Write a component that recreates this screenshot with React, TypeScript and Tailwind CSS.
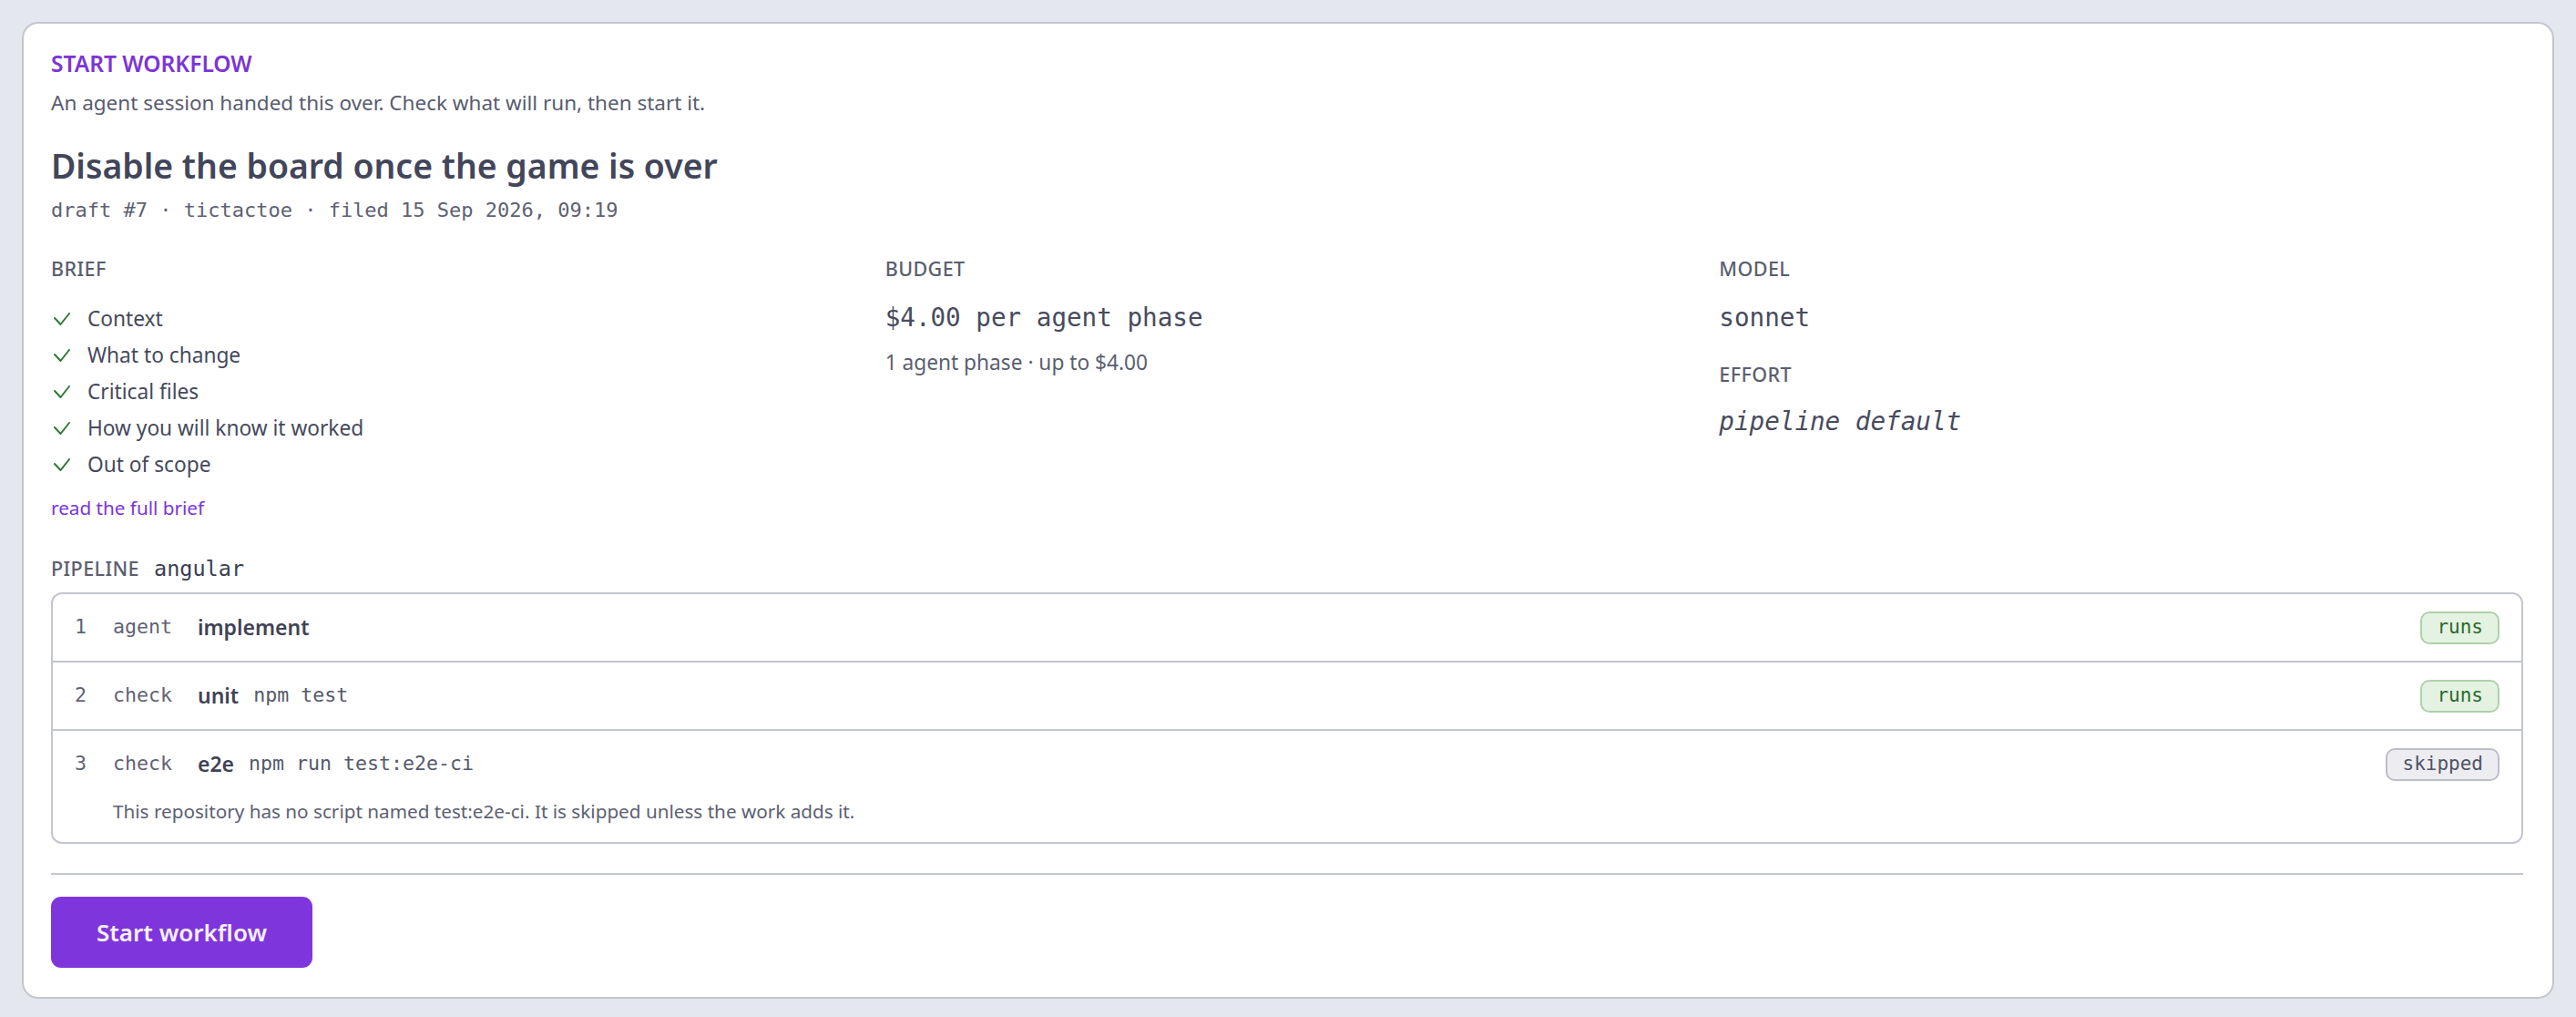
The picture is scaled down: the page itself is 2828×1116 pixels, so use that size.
import React from 'react';

type Step = {
  n: number;
  kind: string;
  name: string;
  cmd?: string;
  status: 'runs' | 'skipped';
  note?: string;
};

const briefItems = [
  'Context',
  'What to change',
  'Critical files',
  'How you will know it worked',
  'Out of scope',
];

const steps: Step[] = [
  { n: 1, kind: 'agent', name: 'implement', status: 'runs' },
  { n: 2, kind: 'check', name: 'unit', cmd: 'npm test', status: 'runs' },
  {
    n: 3,
    kind: 'check',
    name: 'e2e',
    cmd: 'npm run test:e2e-ci',
    status: 'skipped',
    note: 'This repository has no script named test:e2e-ci. It is skipped unless the work adds it.',
  },
];

const Check = () => (
  <svg viewBox="0 0 18 15" className="w-[18px] h-[15px] ml-[3px]" fill="none">
    <polyline points="1,6 7.5,13 17,1" stroke="#2f7a34" strokeWidth="2" strokeLinecap="round" strokeLinejoin="round" />
  </svg>
);

const Label = ({ children, className = '' }: { children: React.ReactNode; className?: string }) => (
  <div className={`text-[21.5px] leading-[28px] font-medium uppercase tracking-[0.02em] text-[#5a5e70] ${className}`}>
    {children}
  </div>
);

const Badge = ({ status }: { status: Step['status'] }) =>
  status === 'runs' ? (
    <span className="inline-flex items-center h-[36px] px-[16px] rounded-[10px] border-2 border-[#aed1a9] bg-[#e4f2e2] font-['DejaVu_Sans_Mono',monospace] text-[21px] text-[#2b6a2d]">
      runs
    </span>
  ) : (
    <span className="inline-flex items-center h-[36px] px-[16px] rounded-[10px] border-2 border-[#bcbec8] bg-[#ededf1] font-['DejaVu_Sans_Mono',monospace] text-[21px] text-[#4f5366]">
      skipped
    </span>
  );

export default function App() {
  return (
    <div className="min-h-screen bg-[#e5e7ef] p-[24px] font-['Noto_Sans',sans-serif]">
      <div className="rounded-[18px] border-2 border-[#c3c5cf] bg-white pl-[30px] pr-[32px] pt-[29px] pb-[32px]">
        {/* header */}
        <div className="text-[24.5px] leading-[30px] font-semibold uppercase text-[#7b35d6]">Start workflow</div>
        <p className="mt-[13px] text-[22.5px] leading-[30px] text-[#585c6e]">
          An agent session handed this over. Check what will run, then start it.
        </p>
        <h1 className="mt-[30px] text-[37.4px] leading-[48px] font-semibold text-[#42465a]">
          Disable the board once the game is over
        </h1>
        <div className="mt-[10px] font-['DejaVu_Sans_Mono',monospace] text-[22px] leading-[30px] text-[#5d6173]">
          draft #7 · tictactoe · filed 15 Sep 2026, 09:19
        </div>

        {/* summary columns */}
        <div className="mt-[35px] grid grid-cols-3 gap-x-[33px]">
          <div>
            <Label>Brief</Label>
            <ul className="mt-[21px]">
              {briefItems.map((item) => (
                <li key={item} className="flex items-center text-[22.7px] leading-[40px] text-[#45495c]">
                  <span className="w-[40px] flex items-center">
                    <Check />
                  </span>
                  {item}
                </li>
              ))}
            </ul>
            <a className="mt-[13px] block text-[20.7px] leading-[28px] text-[#7b35d6]">read the full brief</a>
          </div>

          <div>
            <Label>Budget</Label>
            <div className="mt-[22px] font-['DejaVu_Sans_Mono',monospace] text-[27.6px] leading-[36px] text-[#474b5e]">
              $4.00 per agent phase
            </div>
            <div className="mt-[16px] text-[22.7px] leading-[30px] text-[#5a5e70]">1 agent phase · up to $4.00</div>
          </div>

          <div>
            <Label>Model</Label>
            <div className="mt-[22px] font-['DejaVu_Sans_Mono',monospace] text-[27.6px] leading-[36px] text-[#474b5e]">
              sonnet
            </div>
            <Label className="mt-[30px]">Effort</Label>
            <div className="mt-[20px] font-['DejaVu_Sans_Mono',monospace] italic text-[27.6px] leading-[36px] text-[#474b5e]">
              pipeline default
            </div>
          </div>
        </div>

        {/* pipeline */}
        <div className="mt-[39px] flex items-baseline gap-[16px]">
          <Label>Pipeline</Label>
          <span className="font-['DejaVu_Sans_Mono',monospace] text-[23.5px] leading-[28px] text-[#3a3e52]">angular</span>
        </div>

        <div className="mt-[12px] rounded-[12px] border-2 border-[#c3c5cf]">
          {steps.map((s, i) => (
            <div key={s.n} className={`pl-[24px] pr-[24px] py-[18px] ${i > 0 ? 'border-t-2 border-[#c3c5cf]' : ''}`}>
              <div className="flex items-center h-[37px]">
                <span className="w-[42px] font-['DejaVu_Sans_Mono',monospace] text-[21.6px] text-[#5f6374]">{s.n}</span>
                <span className="w-[93px] font-['DejaVu_Sans_Mono',monospace] text-[21.6px] text-[#5f6374]">{s.kind}</span>
                <span className="text-[23px] font-semibold text-[#3f4356]">{s.name}</span>
                {s.cmd && (
                  <span className="ml-[16px] font-['DejaVu_Sans_Mono',monospace] text-[21.6px] text-[#55596b]">{s.cmd}</span>
                )}
                <span className="ml-auto">
                  <Badge status={s.status} />
                </span>
              </div>
              {s.note && (
                <p className="mt-[18px] pb-[1px] pl-[42px] text-[20.7px] leading-[30px] text-[#5c6072]">{s.note}</p>
              )}
            </div>
          ))}
        </div>

        <hr className="mt-[32px] border-0 border-t-2 border-[#c3c5cf]" />

        <button className="mt-[24px] h-[78px] px-[50px] rounded-[11px] bg-[#7e36dc] text-[26px] font-semibold text-[#f6f0ff]">
          Start workflow
        </button>
      </div>
    </div>
  );
}
